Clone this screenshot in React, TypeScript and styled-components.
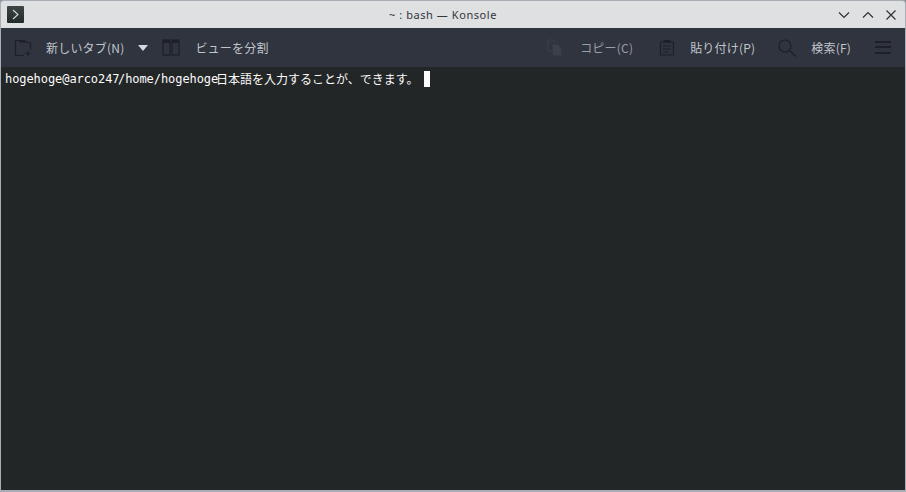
import React from "react";
import styled, { createGlobalStyle } from "styled-components";

const Global = createGlobalStyle`
  html, body { margin: 0; padding: 0; background: #8f9296; overflow: hidden; }
  #root { width: 906px; height: 492px; }
`;

const Frame = styled.div`
  width: 906px;
  height: 492px;
  box-sizing: border-box;
  display: flex;
  flex-direction: column;
  background: #a9adb5;
  padding: 1px 1px 2px 1px;
  border-radius: 4px 4px 0 0;
`;

const TitleBar = styled.div`
  height: 27px;
  flex: none;
  display: flex;
  align-items: center;
  background: #dee0e2;
  padding: 0 9px 0 6px;
  border-radius: 3px 3px 0 0;
`;

const AppIcon = styled.div`
  width: 17px;
  height: 17px;
  background: linear-gradient(#3c4644, #232b2a);
  border-radius: 1px;
  display: flex;
  align-items: center;
  justify-content: center;
`;

const Title = styled.div`
  flex: 1;
  text-align: center;
  font: 11px "Noto Sans", "Noto Sans CJK JP", sans-serif;
  letter-spacing: 0.55px;
  color: #33363a;
  padding-left: 24px;
`;

const WinButtons = styled.div`
  display: flex;
  align-items: center;
  gap: 12px;
`;

const Toolbar = styled.div`
  height: 39px;
  flex: none;
  display: flex;
  align-items: center;
  background: #2f343f;
  padding: 0 14px 0 13px;
  font: 12px "Noto Sans CJK JP", "Noto Sans", sans-serif;
  color: #c1c5cc;
`;

const ToolIcon = styled.span<{ $gap?: number }>`
  display: flex;
  width: 18px;
  height: 18px;
  align-items: center;
  justify-content: center;
  margin-right: ${(p) => p.$gap ?? 13}px;
`;

const ToolLabel = styled.span<{ $gap?: number; $dim?: boolean }>`
  letter-spacing: 0.2px;
  white-space: nowrap;
  margin-right: ${(p) => p.$gap ?? 0}px;
  color: ${(p) => (p.$dim ? "#9a9ea6" : "#c1c5cc")};
`;

const Arrow = styled.span`
  width: 0;
  height: 0;
  border-left: 5px solid transparent;
  border-right: 5px solid transparent;
  border-top: 6px solid #d5d8dc;
  margin-right: 14px;
`;

const Spacer = styled.div`
  flex: 1;
`;

const Terminal = styled.div`
  flex: 1;
  background: #232627;
  padding: 3px 4px;
`;

const Line = styled.div`
  display: flex;
  align-items: center;
  height: 17px;
  color: #fcfcfc;
  white-space: pre;
`;

const Prompt = styled.span`
  font: 12px "DejaVu Sans Mono", monospace;
  letter-spacing: -0.07px;
  width: 113px;
  flex: none;
`;

const Path = styled.span`
  font: 12px "DejaVu Sans Mono", monospace;
  letter-spacing: -0.07px;
  width: 97px;
  flex: none;
`;

const Typed = styled.span`
  font: 12px "Noto Sans CJK JP", sans-serif;
  margin-left: 1px;
  width: 208px;
  flex: none;
  letter-spacing: 0;
`;

const Cursor = styled.span`
  width: 6px;
  height: 16px;
  background: #fcfcfc;
  flex: none;
`;

const stroke = "#1d2026";

export default function App() {
  return (
    <>
      <Global />
      <Frame>
        <TitleBar>
          <AppIcon>
            <svg width="9" height="11" viewBox="0 0 9 11" fill="none">
              <path d="M2 1l5 4.5L2 10" stroke="#d5dad8" strokeWidth="1.1" />
            </svg>
          </AppIcon>
          <Title>~ : bash — Konsole</Title>
          <WinButtons>
            <svg width="12" height="8" viewBox="0 0 12 8" fill="none">
              <path d="M1 1.5l5 5 5-5" stroke="#2f3237" strokeWidth="1.2" />
            </svg>
            <svg width="12" height="8" viewBox="0 0 12 8" fill="none">
              <path d="M1 6.5l5-5 5 5" stroke="#2f3237" strokeWidth="1.2" />
            </svg>
            <svg width="10" height="10" viewBox="0 0 10 10" fill="none">
              <path d="M.5.5l9 9M9.5.5l-9 9" stroke="#2f3237" strokeWidth="1.2" />
            </svg>
          </WinButtons>
        </TitleBar>
        <Toolbar>
          <ToolIcon $gap={14}>
            <svg width="18" height="18" viewBox="0 0 18 18" fill="none">
              <path d="M1.5 12V1.5h9l2 2h4v7M1.5 12v4.5H10" stroke={stroke} strokeWidth="1.2" />
              <path d="M5 1.5h6v2H5z" fill={stroke} />
              <path d="M14 12v5M11.5 14.5h5" stroke={stroke} strokeWidth="1.2" />
            </svg>
          </ToolIcon>
          <ToolLabel $gap={14}>新しいタブ(N)</ToolLabel>
          <Arrow />
          <ToolIcon $gap={15}>
            <svg width="18" height="18" viewBox="0 0 18 18" fill="none">
              <rect x="1" y="1" width="7" height="15" stroke={stroke} strokeWidth="1.2" />
              <rect x="10" y="1" width="7" height="15" stroke={stroke} strokeWidth="1.2" />
              <path d="M1 1h7v3H1zM10 1h7v3h-7z" fill={stroke} />
            </svg>
          </ToolIcon>
          <ToolLabel>ビューを分割</ToolLabel>
          <Spacer />
          <ToolIcon $gap={16}>
            <svg width="16" height="17" viewBox="0 0 16 17" fill="none">
              <path d="M1 1h6v3M1 1v11h4" stroke="#3b404b" strokeWidth="1.2" />
              <path d="M5.5 5.5h5l4 4v7h-9z" fill="#3b404b" />
            </svg>
          </ToolIcon>
          <ToolLabel $gap={25} $dim>コピー(C)</ToolLabel>
          <ToolIcon $gap={14}>
            <svg width="16" height="17" viewBox="0 0 16 17" fill="none">
              <path d="M1.5 3h13v13h-13z" stroke={stroke} strokeWidth="1.2" />
              <path d="M4.5 1h7v3h-7z" fill={stroke} />
              <path d="M4 7h8M4 10h8M4 13h5" stroke={stroke} strokeWidth="1.2" />
            </svg>
          </ToolIcon>
          <ToolLabel $gap={23}>貼り付け(P)</ToolLabel>
          <ToolIcon $gap={15}>
            <svg width="18" height="18" viewBox="0 0 18 18" fill="none">
              <circle cx="7" cy="7" r="6" stroke={stroke} strokeWidth="1.2" />
              <path d="M11.5 11.5l6 6" stroke={stroke} strokeWidth="1.4" />
            </svg>
          </ToolIcon>
          <ToolLabel $gap={24}>検索(F)</ToolLabel>
          <svg width="16" height="13" viewBox="0 0 16 13">
            <path d="M0 0h16v2H0zM0 5h16v2H0zM0 11h16v2H0z" fill={stroke} />
          </svg>
        </Toolbar>
        <Terminal>
          <Line>
            <Prompt>hogehoge@arco247</Prompt>
            <Path>/home/hogehoge</Path>
            <Typed>日本語を入力することが、できます。</Typed>
            <Cursor />
          </Line>
        </Terminal>
      </Frame>
    </>
  );
}
